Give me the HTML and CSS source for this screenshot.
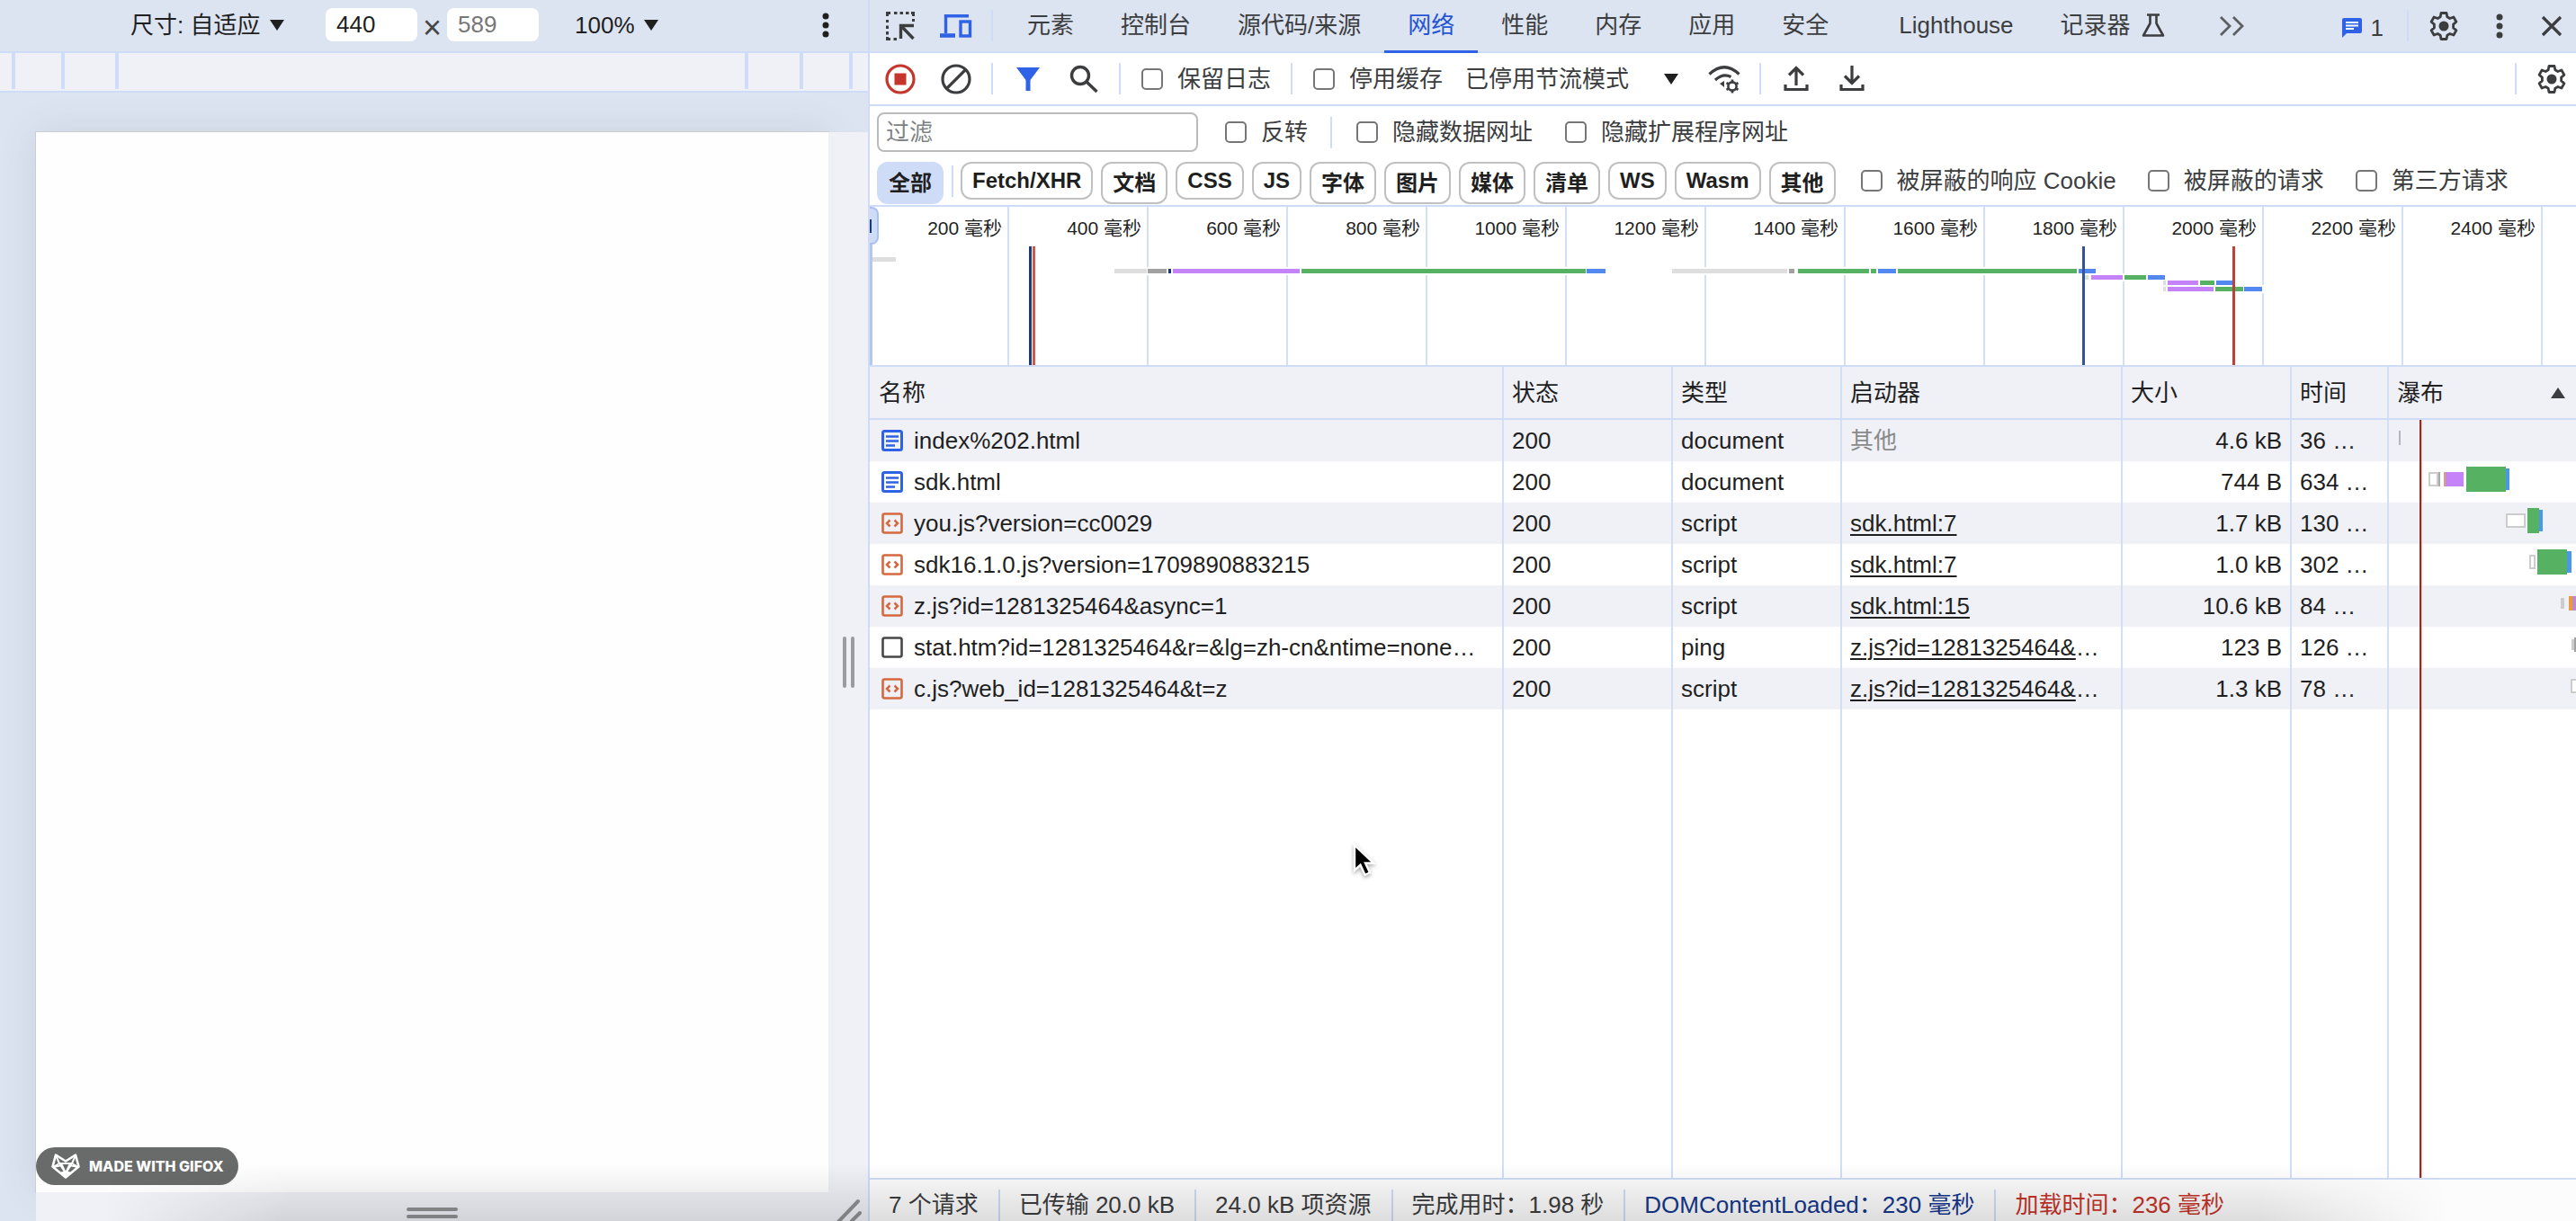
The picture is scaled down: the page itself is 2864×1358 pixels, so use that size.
FILE: index.html
```html
<!DOCTYPE html>
<html lang="zh-CN">
<head>
  <meta charset="UTF-8" />
  <meta name="viewport" content="width=device-width, initial-scale=1.0"/>
  <title>DevTools - 网络</title>
  <link rel="stylesheet" href="styles.css">
</head>
<body>
  <!-- shared icons -->
  <svg class="sprite" aria-hidden="true">
    <symbol id="i-gear" viewBox="0 0 32 32">
      <path d="M13 1.500h6l.8 4.300 3 1.700 4.100-1.500 3 5.200-3.300 2.900v3.800l3.300 2.900-3 5.200-4.100-1.500-3 1.700-.8 4.300h-6l-.8-4.300-3-1.700-4.100 1.500-3-5.200 3.300-2.900v-3.800l-3.300-2.900 3-5.200 4.100 1.500 3-1.700z" fill="none" stroke="currentColor" stroke-width="2.800" stroke-linejoin="round"/>
      <circle cx="16" cy="16" r="5.500" fill="currentColor"/>
    </symbol>
    <symbol id="i-dots" viewBox="0 0 32 32">
      <g fill="currentColor"><circle cx="16" cy="6" r="3.500"/><circle cx="16" cy="16" r="3.500"/><circle cx="16" cy="26" r="3.500"/></g>
    </symbol>
    <symbol id="i-down" viewBox="0 0 16 12"><path d="M0 0h16L8 12z" fill="currentColor"/></symbol>
    <symbol id="i-doc" viewBox="0 0 24 24">
      <rect x="1.500" y="1.500" width="21" height="21" rx="2" fill="none" stroke="#2f62e6" stroke-width="3"/>
      <path d="M5 7.500h14M5 12.500h14M5 17.500h10" stroke="#2f62e6" stroke-width="2.500"/>
    </symbol>
    <symbol id="i-script" viewBox="0 0 24 24">
      <rect x="1.500" y="1.500" width="21" height="21" rx="2" fill="none" stroke="#d4683f" stroke-width="2.600"/>
      <path d="M9.500 8.500L6 12l3.500 3.500M14.500 8.500L18 12l-3.500 3.500" fill="none" stroke="#d4683f" stroke-width="2.500"/>
    </symbol>
    <symbol id="i-blank" viewBox="0 0 24 24">
      <rect x="1.500" y="1.500" width="21" height="21" rx="2" fill="none" stroke="#474747" stroke-width="2.600"/>
    </symbol>
  </svg>

  <div class="window">
    <section class="device">
      <div class="device-bar">
        <label class="pick">
          <select aria-label="尺寸"><option>尺寸: 自适应</option></select>
          <svg class="tri"><use href="#i-down"/></svg>
        </label>
        <div class="size">
          <input type="text" value="440" aria-label="宽度">
          <span class="times">×</span>
          <input type="text" class="muted" value="589" aria-label="高度">
        </div>
        <label class="pick">
          <select aria-label="缩放"><option>100%</option></select>
          <svg class="tri"><use href="#i-down"/></svg>
        </label>
        <button class="icon-btn push" aria-label="更多选项"><svg class="icon"><use href="#i-dots"/></svg></button>
      </div>
      <div class="ruler">
        <svg width="100%" height="40" viewBox="0 0 965 40" preserveAspectRatio="none">
          <path d="M15 0v40M70 0v40M130 0v40M830 0v40M891 0v40M946 0v40" stroke="#cfdcf7" stroke-width="4"/>
        </svg>
      </div>
      <div class="stage">
        <div class="viewport">
          <div class="badge">
            <svg width="32" height="28" viewBox="0 0 32 28" fill="none" stroke="#fff" stroke-width="2" stroke-linejoin="round">
              <path d="M5 1.500l11 7 11-7 3.500 13L16 26.500 1.500 14.500z" stroke-width="2.600"/>
              <path d="M5 2l4 9-7 4 10-2 4 9 4-9 10 2-7-4 4-9M9 11l7 11 7-11M9 11h14"/>
              <path d="M12 21l4 5 4-5z" fill="#fff"/>
            </svg>
            <span>MADE WITH GIFOX</span>
          </div>
        </div>
        <div class="grip grip-right"><i></i><i></i></div>
        <div class="grip grip-bottom"><i></i><i></i></div>
        <div class="grip grip-corner">
          <svg width="44" height="32" viewBox="0 0 44 32"><path d="M33 10L10 34M35 23L26 32" stroke="#8f9193" stroke-width="4" stroke-linecap="round"/></svg>
        </div>
      </div>
    </section>

    <section class="devtools">
      <nav class="tabs">
        <button class="icon-btn" aria-label="选择元素">
          <svg class="icon" viewBox="0 0 32 32" fill="none" stroke="currentColor" stroke-width="3">
            <path d="M1.500 5V1.500H5M9 1.500h3.500M15.500 1.500H19M22 1.500h3.500M28 1.500h2.500V5M30.500 8v3M1.500 9v3M1.500 15.500v3.500M1.500 22v3.500M1.500 28v2.500H5M8.500 30.500H12"/>
            <path d="M16.500 30V15.500H31M17.500 16.500L30.500 30" stroke-width="3.400"/>
          </svg>
        </button>
        <button class="icon-btn blue" aria-label="切换设备工具栏">
          <svg class="icon wide" viewBox="0 0 36 32" fill="none" stroke="currentColor" stroke-width="3.400">
            <path d="M6.500 24V4.700H32"/><path d="M0 26.500h17" stroke-width="4.600"/>
            <rect x="23" y="11" width="10.500" height="16"/>
          </svg>
        </button>
        <span class="sep"></span>
        <div class="tab-list">
          <button class="tab">元素</button>
          <button class="tab">控制台</button>
          <button class="tab">源代码/来源</button>
          <button class="tab active">网络</button>
          <button class="tab">性能</button>
          <button class="tab">内存</button>
          <button class="tab">应用</button>
          <button class="tab">安全</button>
          <button class="tab spaced">Lighthouse</button>
          <button class="tab">记录器
            <svg width="26" height="26" viewBox="0 0 26 26" fill="none" stroke="currentColor" stroke-width="2.600"><path d="M6 1.500h14M9.500 2v9L2 24.500h22L16.500 11V2" stroke-linejoin="round"/></svg>
          </button>
        </div>
        <button class="icon-btn more" aria-label="更多标签">
          <svg class="icon" viewBox="0 0 32 32" fill="none" stroke="#5c5e62" stroke-width="2.800"><path d="M3 6l10 10L3 26M17 6l10 10-10 10"/></svg>
        </button>
        <button class="issues" aria-label="1 个问题">
          <svg width="22" height="22" viewBox="0 0 22 22"><path d="M2 0h18a2 2 0 0 1 2 2v13a2 2 0 0 1-2 2H5l-5 5V2a2 2 0 0 1 2-2z" fill="#2f62e6"/><path d="M4 5h14M4 8.500h14M4 12h9" stroke="#fff" stroke-width="1.800"/></svg>
          1
        </button>
        <span class="sep"></span>
        <button class="icon-btn" aria-label="设置"><svg class="icon"><use href="#i-gear"/></svg></button>
        <button class="icon-btn" aria-label="自定义"><svg class="icon"><use href="#i-dots"/></svg></button>
        <button class="icon-btn last" aria-label="关闭">
          <svg class="icon" viewBox="0 0 32 32" fill="none" stroke="currentColor" stroke-width="3.200"><path d="M6 6l20 20M26 6L6 26"/></svg>
        </button>
      </nav>

      <div class="toolbar">
        <button class="icon-btn red" aria-label="停止录制">
          <svg class="icon big" viewBox="0 0 34 34"><circle cx="17" cy="17" r="15" fill="none" stroke="currentColor" stroke-width="3.200"/><rect x="10.500" y="10.500" width="13" height="13" fill="currentColor"/></svg>
        </button>
        <button class="icon-btn" aria-label="清除">
          <svg class="icon big" viewBox="0 0 34 34" fill="none" stroke="currentColor" stroke-width="3.200"><circle cx="17" cy="17" r="15"/><path d="M27 7L7 27"/></svg>
        </button>
        <span class="sep"></span>
        <button class="icon-btn blue" aria-label="过滤">
          <svg class="icon" viewBox="0 0 32 32"><path d="M3 3h26L18.500 17v12h-5V17z" fill="currentColor"/></svg>
        </button>
        <button class="icon-btn" aria-label="搜索">
          <svg class="icon" viewBox="0 0 32 32" fill="none" stroke="currentColor" stroke-width="3.400"><circle cx="12" cy="12" r="9.500"/><path d="M18.500 18.500L30.500 30"/></svg>
        </button>
        <span class="sep"></span>
        <label class="check"><input type="checkbox"> 保留日志</label>
        <span class="sep"></span>
        <label class="check"><input type="checkbox"> 停用缓存</label>
        <label class="pick throttle">
          <select aria-label="节流"><option>已停用节流模式</option></select>
          <svg class="tri"><use href="#i-down"/></svg>
        </label>
        <button class="icon-btn" aria-label="网络状况">
          <svg class="icon wide" viewBox="0 0 36 32" fill="none" stroke="currentColor" stroke-width="3.200">
            <path d="M1.500 10.500Q18-5 34.500 10.500M8 17q8.500-8 17.500-3.500"/>
            <path d="M13 21l5-3v7z" fill="currentColor" stroke="none"/>
            <circle cx="27" cy="24" r="4.600" stroke-width="2.600"/>
            <path d="M27 16.500v3M27 28.500v3M20.500 20.200l2.600 1.500M30.900 26.300l2.600 1.500M20.500 27.800l2.600-1.500M30.900 21.700l2.600-1.500" stroke-width="2.600"/>
          </svg>
        </button>
        <span class="sep"></span>
        <button class="icon-btn" aria-label="导入 HAR">
          <svg class="icon" viewBox="0 0 32 32" fill="none" stroke="currentColor" stroke-width="3.200"><path d="M4 22v5.500h24V22M16 23V4M8 11.500l8-8 8 8"/></svg>
        </button>
        <button class="icon-btn" aria-label="导出 HAR">
          <svg class="icon" viewBox="0 0 32 32" fill="none" stroke="currentColor" stroke-width="3.200"><path d="M4 22v5.500h24V22M16 1v20M8 12.500l8 8 8-8"/></svg>
        </button>
        <span class="sep push"></span>
        <button class="icon-btn last" aria-label="网络设置"><svg class="icon"><use href="#i-gear"/></svg></button>
      </div>

      <div class="filters">
        <div class="filter-row">
          <input class="filter-input" type="text" placeholder="过滤" aria-label="过滤">
          <label class="check invert"><input type="checkbox"> 反转</label>
          <span class="sep"></span>
          <label class="check"><input type="checkbox"> 隐藏数据网址</label>
          <label class="check"><input type="checkbox"> 隐藏扩展程序网址</label>
        </div>
        <div class="chip-row">
          <button class="chip on">全部</button>
          <span class="chip-sep"></span>
          <button class="chip latin">Fetch/XHR</button>
          <button class="chip">文档</button>
          <button class="chip latin">CSS</button>
          <button class="chip latin">JS</button>
          <button class="chip">字体</button>
          <button class="chip">图片</button>
          <button class="chip">媒体</button>
          <button class="chip">清单</button>
          <button class="chip latin">WS</button>
          <button class="chip latin">Wasm</button>
          <button class="chip">其他</button>
          <div class="chip-checks">
            <label class="check"><input type="checkbox"> 被屏蔽的响应 Cookie</label>
            <label class="check"><input type="checkbox"> 被屏蔽的请求</label>
            <label class="check"><input type="checkbox"> 第三方请求</label>
          </div>
        </div>
      </div>

      <div class="overview">
        <div class="ticks">
          <span>200 毫秒</span><span>400 毫秒</span><span>600 毫秒</span><span>800 毫秒</span>
          <span>1000 毫秒</span><span>1200 毫秒</span><span>1400 毫秒</span><span>1600 毫秒</span>
          <span>1800 毫秒</span><span>2000 毫秒</span><span>2200 毫秒</span><span>2400 毫秒</span>
        </div>
        <svg class="bars" viewBox="0 0 1897 176" preserveAspectRatio="none" shape-rendering="crispEdges">
          <g fill="#fff">
            <path d="M271 67h549v9H271zM891 67h474v9H891zM1350 74h92v9H1350zM1438 81h80v8h-80zM1438 87h112v9h-112z"/>
          </g>
          <g fill="#dedede">
            <path d="M2 56h27v5H2zM272 69h36v5h-36zM892 69h128v5H892zM1351 76h4v5h-4zM1438 82h3v5h-3zM1438 89h3v5h-3z"/>
          </g>
          <g fill="#a1a1a1"><path d="M309 69h21v5h-21zM1022 69h6v5h-6z"/></g>
          <path d="M332 69h3v5h-3z" fill="#16388c"/>
          <g fill="#c583f9"><path d="M337 69h141v5H337zM1358 76h35v5h-35zM1443 82h34v5h-34zM1443 89h51v5h-51z"/></g>
          <g fill="#57b162"><path d="M480 69h316v5H480zM1032 69h79v5h-79zM1113 69h6v5h-6zM1143 69h199v5h-199zM1395 76h24v5h-24zM1479 82h16v5h-16zM1496 89h31v5h-31z"/></g>
          <g fill="#5388f0"><path d="M797 69h21v5h-21zM1121 69h20v5h-20zM1344 69h19v5h-19zM1421 76h19v5h-19zM1497 82h19v5h-19zM1528 89h20v5h-20z"/></g>
          <path d="M177 44h3v132h-3z" fill="#1c3c74"/><path d="M181 44h3v132h-3z" fill="#cb5a4c"/>
          <path d="M1348 44h3v132h-3z" fill="#33549a"/><path d="M1515 44h3v132h-3z" fill="#b8433d"/>
        </svg>
        <span class="handle"></span>
      </div>

      <div class="grid">
        <table>
          <colgroup>
            <col class="c-name"><col class="c-status"><col class="c-type"><col class="c-init"><col class="c-size"><col class="c-time"><col>
          </colgroup>
          <thead>
            <tr><th>名称</th><th>状态</th><th>类型</th><th>启动器</th><th>大小</th><th>时间</th>
              <th><div class="sorted">瀑布 <svg class="tri up"><use href="#i-down"/></svg></div></th></tr>
          </thead>
          <tbody>
            <tr>
              <td><svg class="file"><use href="#i-doc"/></svg>index%202.html</td><td>200</td><td>document</td>
              <td class="muted">其他</td><td class="num">4.6 kB</td><td>36 …</td>
              <td class="wf"><svg width="208" height="46"><path d="M11 12h2v16h-2z" fill="#b5b7ba"/></svg></td>
            </tr>
            <tr>
              <td><svg class="file"><use href="#i-doc"/></svg>sdk.html</td><td>200</td><td>document</td>
              <td></td><td class="num">744 B</td><td>634 …</td>
              <td class="wf"><svg width="208" height="46">
                <path d="M45 13h9v14h-9z" fill="#fff" stroke="#ccc" stroke-width="2"/><path d="M55 12h2v16h-2z" fill="#aaa"/>
                <path d="M61 12h2v16h-2z" fill="#e0a070"/><path d="M63 12h20v16H63z" fill="#c583f9"/>
                <path d="M86 6h44v28H86z" fill="#57b162"/><path d="M130 8h4v24h-4z" fill="#4b97ea"/>
              </svg></td>
            </tr>
            <tr>
              <td><svg class="file"><use href="#i-script"/></svg>you.js?version=cc0029</td><td>200</td><td>script</td>
              <td><a href="#">sdk.html:7</a></td><td class="num">1.7 kB</td><td>130 …</td>
              <td class="wf"><svg width="208" height="46">
                <path d="M131 13h20v14h-20z" fill="#fff" stroke="#ccc" stroke-width="2"/>
                <path d="M154 6h13v28h-13z" fill="#57b162"/><path d="M167 8h4v24h-4z" fill="#4b97ea"/>
              </svg></td>
            </tr>
            <tr>
              <td><svg class="file"><use href="#i-script"/></svg>sdk16.1.0.js?version=1709890883215</td><td>200</td><td>script</td>
              <td><a href="#">sdk.html:7</a></td><td class="num">1.0 kB</td><td>302 …</td>
              <td class="wf"><svg width="208" height="46">
                <path d="M157 13h5v14h-5z" fill="#fff" stroke="#ccc" stroke-width="2"/>
                <path d="M165 6h33v28h-33z" fill="#57b162"/><path d="M198 8h5v24h-5z" fill="#4b97ea"/>
              </svg></td>
            </tr>
            <tr>
              <td><svg class="file"><use href="#i-script"/></svg>z.js?id=1281325464&amp;async=1</td><td>200</td><td>script</td>
              <td><a href="#">sdk.html:15</a></td><td class="num">10.6 kB</td><td>84 …</td>
              <td class="wf"><svg width="208" height="46">
                <path d="M191 14h4v12h-4z" fill="#ccc"/><path d="M200 12h4v16h-4z" fill="#ea9b3b"/><path d="M204 12h4v16h-4z" fill="#c08ac8"/>
              </svg></td>
            </tr>
            <tr>
              <td><svg class="file"><use href="#i-blank"/></svg>stat.htm?id=1281325464&amp;r=&amp;lg=zh-cn&amp;ntime=none…</td><td>200</td><td>ping</td>
              <td><a href="#">z.js?id=1281325464&amp;</a>…</td><td class="num">123 B</td><td>126 …</td>
              <td class="wf"><svg width="208" height="46"><path d="M203 14h3v12h-3z" fill="#ccc"/><path d="M206 12h2v16h-2z" fill="#a1a1a1"/></svg></td>
            </tr>
            <tr>
              <td><svg class="file"><use href="#i-script"/></svg>c.js?web_id=1281325464&amp;t=z</td><td>200</td><td>script</td>
              <td><a href="#">z.js?id=1281325464&amp;</a>…</td><td class="num">1.3 kB</td><td>78 …</td>
              <td class="wf"><svg width="208" height="46"><path d="M203 13h8v14h-8z" fill="#fff" stroke="#ccc" stroke-width="2"/></svg></td>
            </tr>
            <tr class="filler"><td></td><td></td><td></td><td></td><td></td><td></td><td></td></tr>
          </tbody>
        </table>
        <span class="load-line"></span>
      </div>

      <footer class="status">
        <span>7 个请求</span>
        <span>已传输 20.0 kB</span>
        <span>24.0 kB 项资源</span>
        <span>完成用时：1.98 秒</span>
        <span class="dcl">DOMContentLoaded：230 毫秒</span>
        <span class="load">加载时间：236 毫秒</span>
      </footer>
    </section>
  </div>

  <div class="floor-shadow"></div>
  <svg class="pointer" width="30" height="40" viewBox="0 0 30 40"><path d="M3 2v28l6.500-6 5 11 5.500-2.500-5-10.500H24z" fill="#000" stroke="#fff" stroke-width="2.400"/></svg>
</body>
</html>
```

FILE: styles.css
```css
* {
  box-sizing: border-box;
}
body {
  margin: 0;
  font-family: "Liberation Sans", "Noto Sans CJK SC", sans-serif;
  font-size: 26px;
  line-height: 34px;
  color: #3c3d3f;
  background: #fff;
  overflow: hidden;
}
button, input, select {
  font: inherit;
  color: inherit;
  margin: 0;
  padding: 0;
  border: 0;
  background: none;
}
select {
  appearance: none;
}
svg {
  display: block;
  flex: none;
}
.sprite {
  position: absolute;
  width: 0;
  height: 0;
}
.window {
  display: grid;
  grid-template-columns: 965fr 1899fr;
  height: 100vh;
}
.push {
  margin-left: auto;
}
.muted {
  color: #777;
}

/* icons and small controls */
.icon-btn {
  display: flex;
  align-items: center;
  justify-content: center;
  flex: none;
  width: 62px;
  height: 56px;
}
.icon-btn.last {
  width: 54px;
}
.icon {
  width: 32px;
  height: 32px;
}
.icon.wide {
  width: 36px;
}
.icon.big {
  width: 34px;
  height: 34px;
}
.blue {
  color: #2f62e6;
}
.red {
  color: #c5352b;
}
.tri {
  width: 16px;
  height: 12px;
  color: #1f1f1f;
}
.tri.up {
  transform: rotate(180deg);
}
.sep {
  flex: none;
  width: 2px;
  height: 35px;
  margin: 0 8px;
  background: #cfdcf7;
}
.sep.push {
  margin: 0 12px 0 auto;
}
.pick {
  display: flex;
  align-items: center;
  gap: 10px;
}
.check {
  display: flex;
  align-items: center;
  gap: 16px;
  padding: 0 14px 0 15px;
  white-space: nowrap;
}
.check input {
  appearance: none;
  width: 24px;
  height: 24px;
  border: 2px solid #747678;
  border-radius: 5px;
}

/* device emulation side */
.device {
  display: flex;
  flex-direction: column;
  min-width: 0;
  background: #dde4f1;
}
.device-bar {
  display: flex;
  align-items: center;
  height: 59px;
  padding: 0 16px 2px 145px;
  border-bottom: 2px solid #cfdcf7;
  color: #1f1f1f;
}
.size {
  display: flex;
  align-items: center;
  gap: 6px;
  margin: 0 40px 0 46px;
}
.size input {
  width: 102px;
  height: 37px;
  padding-left: 12px;
  border-radius: 8px;
  background: #fff;
}
.times {
  width: 21px;
  padding-top: 6px;
  font-size: 36px;
  color: #474747;
}
.ruler {
  height: 44px;
  border-bottom: 2px solid #cfdcf7;
  background: #eff1f7;
}
.stage {
  flex: 1;
  display: grid;
  grid-template-columns: 1fr 44px;
  grid-template-rows: 1fr 32px;
  padding: 44px 0 0 40px;
  overflow: hidden;
}
.viewport {
  display: flex;
  align-items: flex-end;
  padding-bottom: 8px;
  background: #fefefe;
  box-shadow: 0 0 0 1px #cbcfd3, 0 0 40px rgba(60, 70, 80, 0.12);
}
.grip {
  position: relative;
  display: flex;
  align-items: center;
  justify-content: center;
  gap: 5px;
  background: #eff1f7;
}
.grip i {
  width: 4px;
  height: 57px;
  border-radius: 2px;
  background: #9a9c9f;
}
.grip-bottom {
  flex-direction: column;
  gap: 4px;
  padding-top: 13px;
}
.grip-bottom i {
  width: 57px;
  height: 4px;
  background: #8f9193;
}
.badge {
  display: flex;
  align-items: center;
  gap: 10px;
  height: 42px;
  padding: 0 16px 0 17px;
  border-radius: 21px;
  background: #696b6a;
  color: #fff;
  font: 800 16px/20px Inter, "Open Sans", sans-serif;
}

/* devtools side */
.devtools {
  display: flex;
  flex-direction: column;
  min-width: 0;
  border-left: 2px solid #cfdcf7;
  background: #fff;
}
.tabs, .toolbar {
  display: flex;
  align-items: center;
  flex: none;
  height: 59px;
  padding-left: 3px;
  border-bottom: 2px solid #cfdcf7;
}
.tabs {
  background: #dde4f1;
}
.tab-list {
  display: flex;
  align-self: stretch;
  margin-left: 4px;
}
.tab {
  display: flex;
  align-items: center;
  gap: 12px;
  height: 59px;
  padding: 0 26px;
  border-bottom: 3px solid transparent;
  white-space: nowrap;
}
.tab.active {
  color: #2455d6;
  border-color: #2f62e6;
}
.tab.spaced {
  margin-left: 26px;
}
.more {
  margin-left: 18px;
}
.issues {
  display: flex;
  align-items: center;
  gap: 10px;
  margin: 4px 18px 0 auto;
  font-size: 26px;
}
.throttle {
  gap: 38px;
  padding: 0 20px 0 11px;
}
.filters {
  flex: none;
  padding: 7px 0 1px 8px;
  border-bottom: 2px solid #cfdcf7;
}
.filter-row {
  display: flex;
  align-items: center;
}
.filter-input {
  width: 357px;
  height: 44px;
  padding: 0 8px;
  border: 2px solid #bbb;
  border-radius: 8px;
}
.filter-input::placeholder {
  color: #808284;
}
.filter-row .check {
  padding: 0 17px 0 19px;
}
.filter-row .invert {
  padding: 0 17px 0 30px;
}
.chip-row {
  display: flex;
  align-items: flex-start;
  gap: 9px;
  margin-top: 11px;
}
.chip {
  height: 47px;
  padding: 0 11px;
  border: 2px solid #c0c0c0;
  border-radius: 12px;
  font-size: 24px;
  font-weight: 700;
  line-height: 42px;
  color: #1f1f1f;
  white-space: nowrap;
}
.chip.latin {
  height: 42px;
  line-height: 38px;
}
.chip.on {
  background: #cfdcf8;
  border-color: #cfdcf8;
}
.chip-sep {
  width: 2px;
  height: 35px;
  margin: 4px -1px 0 0;
  background: #cfdcf7;
}
.chip-checks {
  display: flex;
  gap: 6px;
  padding: 4px 0 0 4px;
}

/* timeline overview */
.overview {
  position: relative;
  flex: none;
  height: 178px;
  border-bottom: 2px solid #cfdcf7;
  overflow: hidden;
}
.ticks {
  display: flex;
  height: 100%;
}
.ticks span {
  flex: none;
  width: 155px;
  padding: 7px 6px 0 0;
  border-right: 2px solid #d3dff5;
  font-size: 21px;
  color: #1f1f1f;
  text-align: right;
}
.bars {
  position: absolute;
  inset: 0;
  width: 100%;
  height: 100%;
}
.handle {
  position: absolute;
  left: 0;
  top: 0;
  width: 10px;
  height: 42px;
  border: 2px solid #a9c0f0;
  border-left: 0;
  border-radius: 0 8px 8px 0;
  background: linear-gradient(#16388c, #16388c) 0 center / 2px 15px no-repeat #cfdcf8;
}
.overview::after {
  content: "";
  position: absolute;
  left: 0;
  top: 42px;
  bottom: 0;
  width: 3px;
  background: #b3c7f3;
}

/* request table */
.grid {
  position: relative;
  flex: 1;
  min-height: 0;
}
table {
  width: 100%;
  height: 100%;
  table-layout: fixed;
  border-collapse: separate;
  border-spacing: 0;
  color: #1f1f1f;
}
.c-name { width: 705px; }
.c-status, .c-type, .c-size { width: 188px; }
.c-init { width: 312px; }
.c-time { width: 108px; }
th, td {
  height: 46px;
  padding: 0 8px 0 9px;
  border-right: 2px solid #d3dff5;
  text-align: left;
  font-weight: 400;
  white-space: nowrap;
  overflow: hidden;
  text-overflow: ellipsis;
}
th:last-child, td:last-child {
  border-right: 0;
}
th {
  height: 59px;
  border-bottom: 2px solid #cfdcf7;
  background: #eff1f7;
}
th:first-child {
  padding-left: 10px;
}
td:first-child {
  padding-left: 13px;
}
tbody tr:nth-child(odd) td {
  background: #eff1f7;
}
tbody tr.filler td {
  height: auto;
  background: #fff;
}
td.muted {
  color: #8a8a8a;
}
td.num {
  padding-right: 9px;
  text-align: right;
}
td.wf {
  padding: 0;
}
td a {
  color: inherit;
  text-underline-offset: 3px;
  text-decoration-thickness: 2px;
}
.file {
  display: inline-block;
  width: 24px;
  height: 24px;
  margin-right: 12px;
  vertical-align: -3px;
}
.sorted {
  display: flex;
  align-items: center;
  justify-content: space-between;
  padding-right: 4px;
}
.sorted .tri {
  color: #3c3d3f;
}
.load-line {
  position: absolute;
  left: 1723px;
  top: 59px;
  bottom: 0;
  width: 3px;
  background: #8c2f2b;
  border-right: 1px solid #efc4be;
}

.status {
  display: flex;
  flex: none;
  height: 48px;
  padding: 11px 0 0 0;
  border-top: 2px solid #cfdcf7;
  background: #fcfcfc;
  white-space: nowrap;
}
.status span {
  padding: 0 22px 0 21px;
  border-right: 2px solid #cfdcf7;
}
.status span:last-child {
  border-right: 0;
}
.status .dcl {
  color: #16388c;
}
.status .load {
  color: #c5352b;
}

/* things lying over the page */
.floor-shadow {
  position: fixed;
  left: 4%;
  right: 5%;
  bottom: 0;
  height: 64px;
  background: linear-gradient(transparent, rgba(0, 0, 0, 0.12));
  -webkit-mask-image: linear-gradient(90deg, transparent, #000 8%, #000 92%, transparent);
  mask-image: linear-gradient(90deg, transparent, #000 8%, #000 92%, transparent);
  pointer-events: none;
}
.pointer {
  position: fixed;
  left: 1503px;
  top: 938px;
  filter: drop-shadow(0 2px 2px rgba(0, 0, 0, 0.35));
  pointer-events: none;
}
```
